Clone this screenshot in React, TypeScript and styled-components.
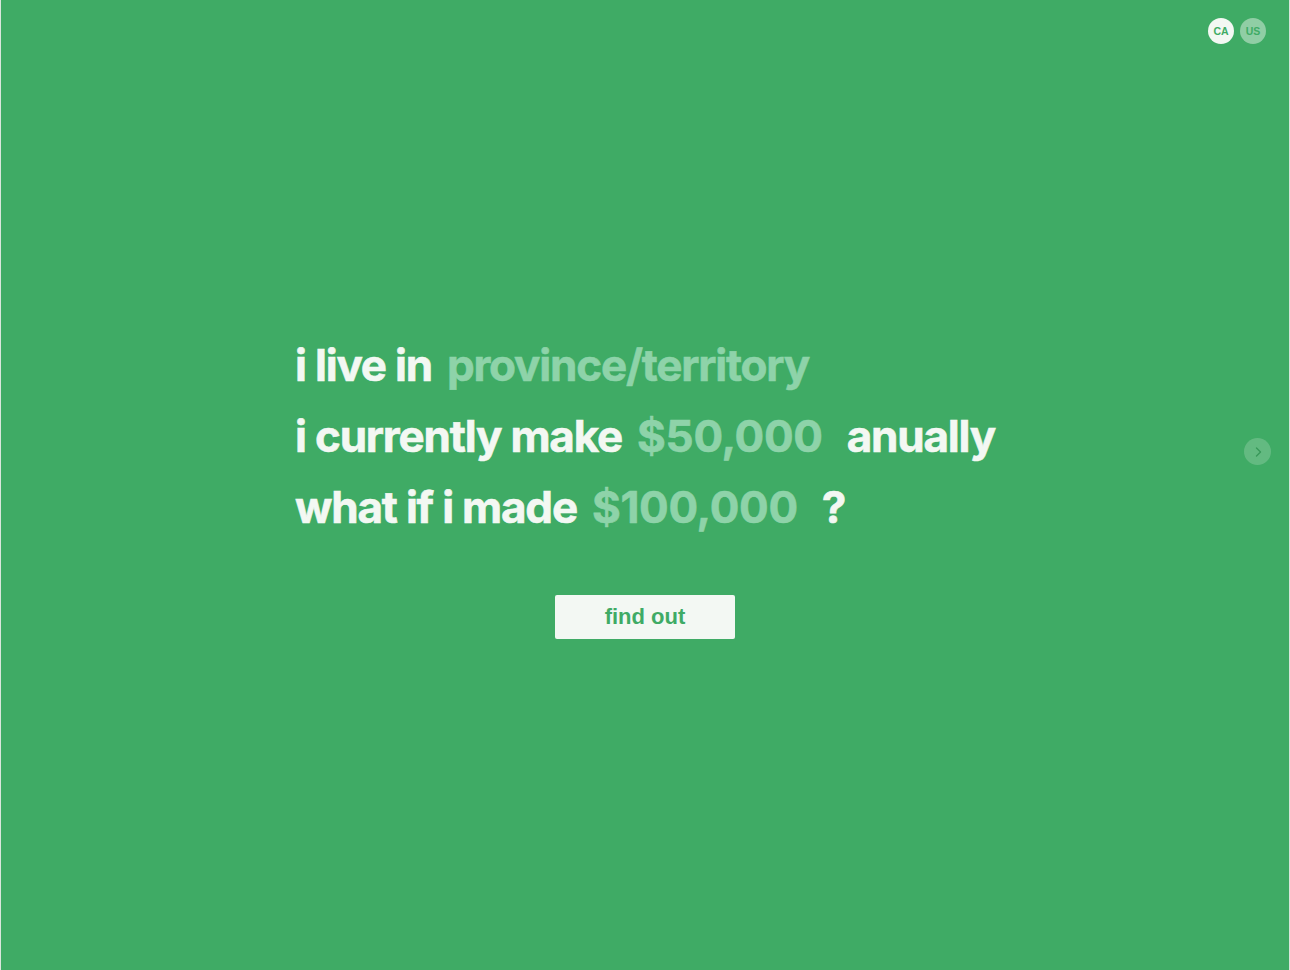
import React from "react";
import styled, { createGlobalStyle } from "styled-components";

const Global = createGlobalStyle`
  html, body { margin: 0; padding: 0; }
  body { background: #3fab65; font-family: Inter, "Noto Sans", sans-serif; }
`;

const Page = styled.div`
  box-sizing: border-box;
  position: relative;
  width: 1290px;
  height: 970px;
  background: #3fab65;
  border-left: 1px solid #d9e6dc;
  border-right: 1px solid #d9e6dc;
  display: flex;
  align-items: center;
  justify-content: center;
`;

const Content = styled.div`
  display: flex;
  flex-direction: column;
  align-items: center;
  margin-top: -2px;
`;

const Lines = styled.div`
  display: flex;
  flex-direction: column;
`;

const Line = styled.div`
  display: flex;
  align-items: baseline;
  height: 71px;
  line-height: 71px;
  font-size: 44px;
  font-weight: 700;
  letter-spacing: -1.2px;
  -webkit-text-stroke: 0.6px currentColor;
  color: #f3f8f3;
  white-space: pre;
`;

const Field = styled.span<{ $after?: number }>`
  color: #8ed3a9;
  margin-left: 15px;
  margin-right: ${(p) => p.$after ?? 0}px;
`;

const Money = styled(Field)`
  letter-spacing: -0.3px;
`;

const Button = styled.button`
  margin-top: 52px;
  width: 180px;
  height: 44px;
  border: none;
  border-radius: 2px;
  background: #f3f8f3;
  color: #3fab65;
  font-family: "Liberation Sans", Arial, sans-serif;
  font-weight: 700;
  font-size: 22px;
  cursor: pointer;
`;

const Switcher = styled.div`
  position: absolute;
  top: 18px;
  right: 23px;
  display: flex;
  gap: 6px;
`;

const Flag = styled.div<{ $active?: boolean }>`
  width: 26px;
  height: 26px;
  border-radius: 50%;
  background: ${(p) => (p.$active ? "#f3f8f3" : "rgba(243,248,243,0.45)")};
  color: #3fab65;
  font-family: "Liberation Sans", Arial, sans-serif;
  font-size: 10.5px;
  font-weight: 700;
  display: flex;
  align-items: center;
  justify-content: center;
`;

const NextBtn = styled.div`
  position: absolute;
  right: 18px;
  top: 438px;
  width: 27px;
  height: 27px;
  border-radius: 50%;
  background: rgba(243, 248, 243, 0.2);
  display: flex;
  align-items: center;
  justify-content: center;
`;

export default function App() {
  return (
    <>
      <Global />
      <Page>
        <Switcher>
          <Flag $active>CA</Flag>
          <Flag>US</Flag>
        </Switcher>
        <NextBtn>
          <svg width="14" height="14" viewBox="0 0 14 14" fill="none">
            <path d="M5.5 3 L9.5 7 L5.5 11" stroke="#38985a" strokeWidth="1.4" strokeLinecap="round" strokeLinejoin="round" />
          </svg>
        </NextBtn>
        <Content>
          <Lines>
            <Line>
              i live in<Field>province/territory</Field>
            </Line>
            <Line>
              i currently make<Money $after={24}>$50,000</Money>anually
            </Line>
            <Line>
              what if i made<Money $after={24}>$100,000</Money>?
            </Line>
          </Lines>
          <Button>find out</Button>
        </Content>
      </Page>
    </>
  );
}
